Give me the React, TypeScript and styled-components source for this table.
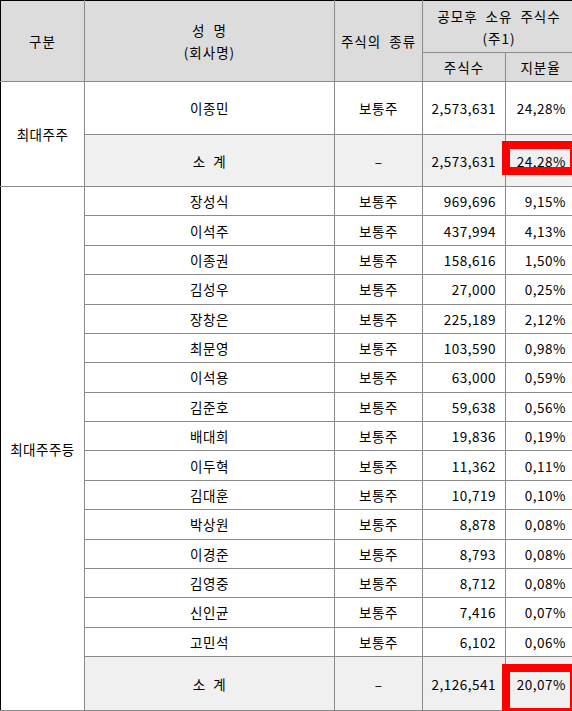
import React from 'react';
import styled, { createGlobalStyle } from 'styled-components';

const GlobalStyle = createGlobalStyle`
  html, body {
    margin: 0;
    padding: 0;
    background: #ffffff;
    overflow: hidden;
  }
`;

type Holder = { name: string; shares: string; ratio: string };

const holders: Holder[] = [
  { name: '장성식', shares: '969,696', ratio: '9,15%' },
  { name: '이석주', shares: '437,994', ratio: '4,13%' },
  { name: '이종권', shares: '158,616', ratio: '1,50%' },
  { name: '김성우', shares: '27,000', ratio: '0,25%' },
  { name: '장창은', shares: '225,189', ratio: '2,12%' },
  { name: '최문영', shares: '103,590', ratio: '0,98%' },
  { name: '이석용', shares: '63,000', ratio: '0,59%' },
  { name: '김준호', shares: '59,638', ratio: '0,56%' },
  { name: '배대희', shares: '19,836', ratio: '0,19%' },
  { name: '이두혁', shares: '11,362', ratio: '0,11%' },
  { name: '김대훈', shares: '10,719', ratio: '0,10%' },
  { name: '박상원', shares: '8,878', ratio: '0,08%' },
  { name: '이경준', shares: '8,793', ratio: '0,08%' },
  { name: '김영중', shares: '8,712', ratio: '0,08%' },
  { name: '신인균', shares: '7,416', ratio: '0,07%' },
  { name: '고민석', shares: '6,102', ratio: '0,06%' },
];

const App = () => {
  return (
    <>
      <GlobalStyle />
      <Table>
        <colgroup>
          <col style={{ width: 84 }} />
          <col style={{ width: 250 }} />
          <col style={{ width: 88 }} />
          <col style={{ width: 83 }} />
          <col style={{ width: 70 }} />
        </colgroup>
        <thead>
          <Row $h={52}>
            <HeadCell rowSpan={2} $first $top>
              구분
            </HeadCell>
            <HeadCell rowSpan={2} $top>
              성 명<br />
              (회사명)
            </HeadCell>
            <HeadCell rowSpan={2} $top>
              주식의 종류
            </HeadCell>
            <HeadCell colSpan={2} $top>
              공모후 소유 주식수
              <br />
              (주1)
            </HeadCell>
          </Row>
          <Row $h={29}>
            <HeadCell>주식수</HeadCell>
            <HeadCell>지분율</HeadCell>
          </Row>
        </thead>
        <tbody>
          <Row $h={53}>
            <Cell rowSpan={2} $first>
              최대주주
            </Cell>
            <Cell>이종민</Cell>
            <Cell>보통주</Cell>
            <NumCell>2,573,631</NumCell>
            <NumCell>24,28%</NumCell>
          </Row>
          <Row $h={52} $sub>
            <Cell>소 계</Cell>
            <Cell>–</Cell>
            <NumCell>2,573,631</NumCell>
            <NumCell>
              24,28%
              <Mark $top={6} $h={34} />
            </NumCell>
          </Row>
          {holders.map((h, i) => (
            <Row key={h.name} $h={29.375}>
              {i === 0 && (
                <Cell rowSpan={holders.length + 1} $first>
                  최대주주등
                </Cell>
              )}
              <Cell>{h.name}</Cell>
              <Cell>보통주</Cell>
              <NumCell>{h.shares}</NumCell>
              <NumCell>{h.ratio}</NumCell>
            </Row>
          ))}
          <Row $h={54} $sub>
            <Cell>소 계</Cell>
            <Cell>–</Cell>
            <NumCell>2,126,541</NumCell>
            <NumCell>
              20,07%
              <Mark $top={7} $h={52} />
            </NumCell>
          </Row>
        </tbody>
      </Table>
    </>
  );
};

export default App;

const Table = styled.table`
  width: 575px;
  table-layout: fixed;
  border-collapse: collapse;
  font-family: 'Noto Sans CJK KR', 'Noto Sans', sans-serif;
  font-size: 13.5px;
  letter-spacing: 0.5px;
  word-spacing: 4px;
  color: #000000;
`;

const Row = styled.tr<{ $h: number; $sub?: boolean }>`
  height: ${({ $h }) => $h}px;
  background-color: ${({ $sub }) => ($sub ? '#f0f0f0' : '#ffffff')};
`;

const Cell = styled.td<{ $first?: boolean }>`
  padding: 0 4px;
  border: 1px solid #8a8a8a;
  border-left: ${({ $first }) => ($first ? '1px solid #000000' : '1px solid #8a8a8a')};
  text-align: center;
  vertical-align: middle;
  line-height: 18px;
  white-space: nowrap;
  background-color: ${({ $first }) => ($first ? '#ffffff' : 'inherit')};
`;

const NumCell = styled.td`
  position: relative;
  padding: 0 9px 0 4px;
  border: 1px solid #8a8a8a;
  text-align: right;
  vertical-align: middle;
  line-height: 18px;
  white-space: nowrap;
`;

const HeadCell = styled.th<{ $first?: boolean; $top?: boolean }>`
  padding: 0 4px;
  border: 1px solid #8a8a8a;
  border-top: ${({ $top }) => ($top ? '1px solid #000000' : '1px solid #8a8a8a')};
  border-left: ${({ $first }) => ($first ? '1px solid #000000' : '1px solid #8a8a8a')};
  background-color: #dcdcdc;
  font-weight: normal;
  letter-spacing: 1px;
  text-align: center;
  vertical-align: middle;
  line-height: 22px;
  white-space: nowrap;
`;

const Mark = styled.span<{ $top: number; $h: number }>`
  position: absolute;
  left: -4px;
  top: ${({ $top }) => $top}px;
  width: 76px;
  height: ${({ $h }) => $h}px;
  box-sizing: border-box;
  border: 8px solid #ff0000;
  pointer-events: none;
`;
